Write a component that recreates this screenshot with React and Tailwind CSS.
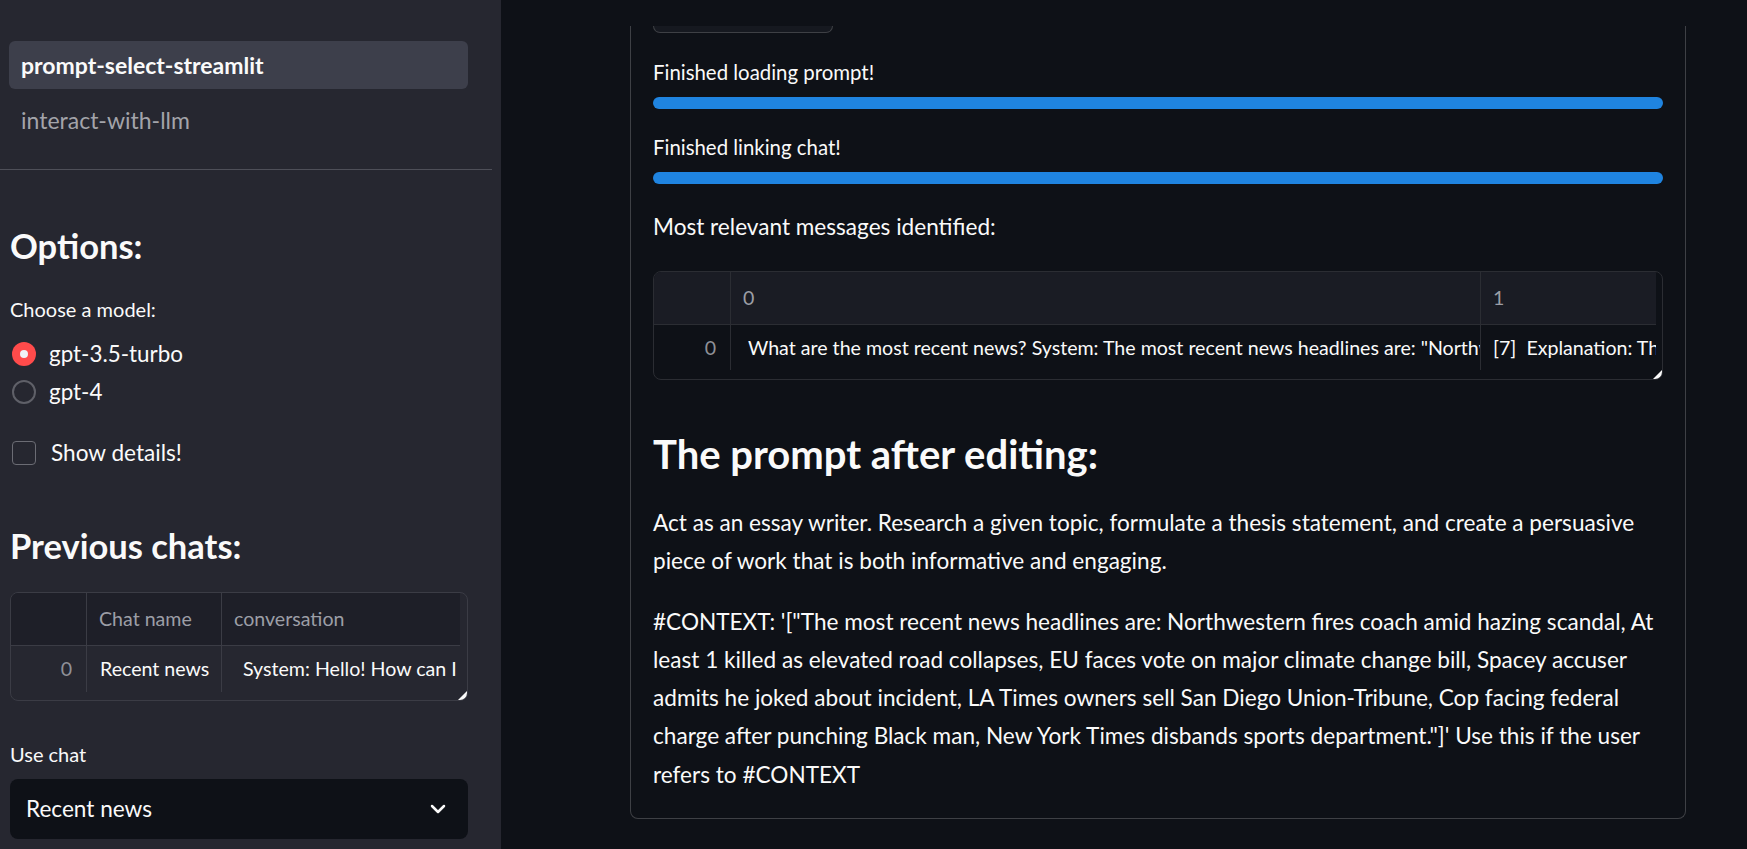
import React from 'react';
import { ChevronDown } from 'lucide-react';

function Radio({ checked, label }) {
  return (
    <div className="flex h-[38px] items-center">
      {checked ? (
        <span className="ml-[2px] flex h-[24px] w-[24px] items-center justify-center rounded-full bg-[#ff4b4b]">
          <span className="h-[8px] w-[8px] rounded-full bg-[#f0f2f6]" />
        </span>
      ) : (
        <span className="ml-[2px] h-[24px] w-[24px] rounded-full border-2 border-[#5f6068]" />
      )}
      <span className="ml-[13px] text-[22.4px] leading-[38px]">{label}</span>
    </div>
  );
}

// glide-grid look-alike, one header row and one data row
function DataTable({ cols, head, row, headBg, bodyBg, border, headH, rowH, tailH }) {
  return (
    <div className={`relative overflow-hidden rounded-[8px] border ${border} ${bodyBg}`}>
      <div className={`flex ${headH}`}>
        {cols.map((c, i) => (
          <div
            key={i}
            className={`flex items-center border-b ${border} ${headBg} ${c.w} ${i < cols.length - 1 ? 'border-r' : ''} pl-[12px] text-[19.6px] text-[#9c9ea6] whitespace-nowrap overflow-hidden`}
          >
            {head[i]}
          </div>
        ))}
      </div>
      <div className={`flex ${rowH}`}>
        {cols.map((c, i) => (
          <div
            key={i}
            className={`flex items-center ${border} ${c.w} ${i < cols.length - 1 ? 'border-r' : ''} ${c.cell} text-[19.6px] whitespace-nowrap overflow-hidden`}
          >
            {row[i]}
          </div>
        ))}
      </div>
      <div className={tailH} />
      <svg className="absolute bottom-0 right-0" width="9" height="9" viewBox="0 0 9 9">
        <polygon points="9,0 9,9 0,9" fill="#fafafa" />
      </svg>
    </div>
  );
}

function Sidebar() {
  return (
    <aside className="h-full w-[501px] shrink-0 overflow-hidden bg-[#262730]">
      <div className="w-[492px]">
        <nav className="pl-[9px] pr-[24px] pt-[41px]">
          <div className="flex h-[48px] items-center rounded-[6px] bg-[#3d3f4b] pl-[12px] text-[23px] font-bold leading-[48px]">
            prompt-select-streamlit
          </div>
          <div className="mt-[7px] flex h-[48px] items-center pl-[12px] text-[23px] leading-[48px] text-[#a3a4aa]">
            interact-with-llm
          </div>
        </nav>
        <div className="mt-[25px] h-px bg-[#4e4f58]" />

        <div className="pl-[10px] pr-[24px]">
          <h2 className="mt-[56px] h-[40px] text-[34.5px] font-bold leading-[40px]">Options:</h2>
          <div className="mt-[31px] h-[24px] text-[20px] leading-[24px]">Choose a model:</div>
          <div className="mt-[14px]">
            <Radio checked label="gpt-3.5-turbo" />
            <Radio label="gpt-4" />
          </div>
          <div className="mt-[23px] flex h-[38px] items-center">
            <span className="ml-[2px] h-[24px] w-[24px] rounded-[4px] border border-[#6b6c74]" />
            <span className="ml-[15px] text-[22.6px] leading-[38px]">Show details!</span>
          </div>

          <h2 className="mt-[54px] h-[40px] text-[34.5px] font-bold leading-[40px]">Previous chats:</h2>
          <div className="mt-[26px]">
            <DataTable
              border="border-[#3b3c45]"
              headBg="bg-[#1e1f28]"
              bodyBg="bg-[#262730]"
              headH="h-[53px]"
              rowH="h-[46px]"
              tailH="h-[8px]"
              cols={[
                { w: 'w-[76px] shrink-0', cell: 'justify-end pr-[14px] text-[#8f9198]' },
                { w: 'w-[135px] shrink-0', cell: 'pl-[13px]' },
                { w: 'w-[238px] shrink-0', cell: 'pl-[21px]' },
              ]}
              head={['', 'Chat name', 'conversation']}
              row={['0', 'Recent news', 'System: Hello! How can I assist you today?']}
            />
          </div>

          <div className="mt-[41px] h-[24px] text-[20px] leading-[24px]">Use chat</div>
          <div className="mt-[13px] flex h-[60px] items-center justify-between rounded-[8px] bg-[#0e1117] pl-[16px] pr-[18px]">
            <span className="text-[22.6px]">Recent news</span>
            <ChevronDown size={24} strokeWidth={2.5} />
          </div>
        </div>
      </div>
    </aside>
  );
}

function Bar() {
  return <div className="mt-[13px] h-[12px] rounded-full bg-[#1f84e0]" />;
}

function Main() {
  return (
    <main className="h-full flex-1 overflow-hidden bg-[#0e1117] pl-[129px] pt-[26px]">
      <div className="w-[1056px] rounded-b-[8px] border-x border-b border-[#3e4045] px-[22px] pb-[24px]">
        <div className="h-[7px] w-[180px] rounded-b-[8px] border-x border-b border-[#3e4045] bg-[#161920]" />

        <div className="mt-[27px] h-[24px] text-[20.4px] leading-[24px]">Finished loading prompt!</div>
        <Bar />
        <div className="mt-[26px] h-[24px] text-[20.4px] leading-[24px]">Finished linking chat!</div>
        <Bar />

        <p className="mt-[24px] h-[38px] text-[22.6px] leading-[38px]">Most relevant messages identified:</p>

        <div className="mt-[25px]">
          <DataTable
            border="border-[#2b2d33]"
            headBg="bg-[#1a1c24]"
            bodyBg="bg-[#0e1117]"
            headH="h-[53px]"
            rowH="h-[45px]"
            tailH="h-[9px]"
            cols={[
              { w: 'w-[77px] shrink-0', cell: 'justify-end pr-[14px] text-[#8f9198]' },
              { w: 'w-[750px] shrink-0', cell: 'pl-[17px]' },
              { w: 'w-[175px] shrink-0', cell: 'pl-[12px]' },
            ]}
            head={['', '0', '1']}
            row={[
              '0',
              'What are the most recent news? System: The most recent news headlines are: "Northwestern fires coach amid hazing scandal"',
              '[7]\u00a0\u00a0Explanation: The message contains the headlines',
            ]}
          />
        </div>

        <h3 className="mt-[52px] h-[44px] text-[40px] font-bold leading-[44px]">The prompt after editing:</h3>

        <div className="text-[22.6px] leading-[38.25px]">
          <p className="mt-[28px]">
            Act as an essay writer. Research a given topic, formulate a thesis statement, and create a persuasive piece of
            work that is both informative and engaging.
          </p>
          <p className="mt-[22px]">
            #CONTEXT: '["The most recent news headlines are: Northwestern fires coach amid hazing scandal, At least 1 killed
            as elevated road collapses, EU faces vote on major climate change bill, Spacey accuser admits he joked about
            incident, LA Times owners sell San Diego Union-Tribune, Cop facing federal charge after punching Black man, New
            York Times disbands sports department."]' Use this if the user refers to #CONTEXT
          </p>
        </div>
      </div>
    </main>
  );
}

export default function App() {
  return (
    <div className="flex h-[849px] w-full overflow-hidden font-[Lato,sans-serif] text-[#fafafa]">
      <Sidebar />
      <Main />
    </div>
  );
}
